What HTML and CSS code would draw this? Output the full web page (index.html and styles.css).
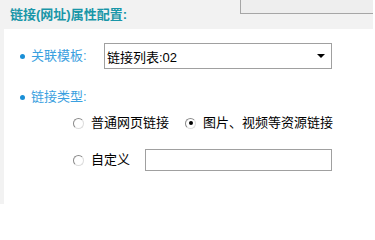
FILE: index.html
```html
<!DOCTYPE html>
<html lang="zh-CN">
<head>
<meta charset="utf-8">
<title>链接(网址)属性配置</title>
<link rel="stylesheet" href="styles.css">
</head>
<body>
<div class="page">
  <div class="header">
    <div class="title">链接(网址)属性配置:</div>
    <div class="topbox"></div>
  </div>
  <div class="content">
    <div class="field first">
      <span class="dot"></span><span class="label">关联模板:</span>
      <div class="select"><span class="sel-text">链接列表:02</span><span class="arrow"></span></div>
    </div>
    <div class="field type">
      <span class="dot"></span><span class="label">链接类型:</span>
    </div>
    <div class="options">
      <div class="optrow row1">
        <label class="opt"><span class="radio"></span>普通网页链接</label>
        <label class="opt"><span class="radio checked"></span>图片、视频等资源链接</label>
      </div>
      <div class="optrow row2">
        <label class="opt"><span class="radio"></span>自定义</label>
        <span class="input"></span>
      </div>
    </div>
  </div>
</div>
</body>
</html>
```

FILE: styles.css
```css
html, body {
  margin: 0;
  padding: 0;
  background: #ffffff;
}
body {
  font-family: "Liberation Sans", "Noto Sans CJK SC", sans-serif;
}
.page {
  border-left: 4px solid #f2f2f2;
  min-height: 204px;
  box-sizing: border-box;
}
.header {
  display: flex;
  align-items: flex-start;
  height: 29px;
  background: #f2f2f2;
  margin-right: 2px;
}
.title {
  padding: 7px 0 0 6px;
  font-size: 13px;
  line-height: 15px;
  font-weight: bold;
  color: #1996a8;
}
.topbox {
  margin-left: auto;
  width: 133px;
  height: 14px;
  box-sizing: border-box;
  border-left: 1px solid #a6a6a6;
  border-bottom: 1px solid #a6a6a6;
  background: #eeeeee;
}
.content {
  padding-left: 16px;
}
.field {
  display: flex;
  align-items: center;
}
.field.first {
  margin-top: 14px;
  height: 26px;
}
.field.type {
  margin-top: 20px;
  height: 16px;
}
.dot {
  width: 5px;
  height: 5px;
  border-radius: 50%;
  background: #1a8fd6;
  margin-right: 6px;
  flex: none;
}
.label {
  width: 73px;
  font-size: 13px;
  line-height: 16px;
  color: #3aa0e0;
}
.select {
  width: 228px;
  height: 26px;
  box-sizing: border-box;
  border: 1px solid #a0a0a0;
  display: flex;
  align-items: center;
  justify-content: space-between;
  padding: 0 6px 0 2px;
  font-size: 13px;
  color: #000;
}
.arrow {
  width: 0;
  height: 0;
  border-left: 4px solid transparent;
  border-right: 4px solid transparent;
  border-top: 4px solid #000;
}
.options {
  padding-left: 53px;
}
.optrow {
  display: flex;
  align-items: center;
}
.row1 {
  margin-top: 10px;
  height: 16px;
}
.row2 {
  margin-top: 18px;
  height: 22px;
}
.opt {
  display: flex;
  align-items: center;
  font-size: 13px;
  line-height: 16px;
  color: #000;
}
.opt + .opt {
  margin-left: 16px;
}
.radio {
  position: relative;
  width: 11px;
  height: 11px;
  box-sizing: border-box;
  border: 1px solid;
  border-color: #8a8a8a #dcdcdc #dcdcdc #8a8a8a;
  border-radius: 50%;
  background: #ffffff;
  margin-right: 7px;
  flex: none;
}
.radio.checked::after {
  content: "";
  position: absolute;
  left: 2.5px;
  top: 2.5px;
  width: 4px;
  height: 4px;
  border-radius: 50%;
  background: #000;
}
.input {
  width: 187px;
  height: 22px;
  box-sizing: border-box;
  border: 1px solid #a0a0a0;
  margin-left: 15px;
  background: #fff;
}
```
